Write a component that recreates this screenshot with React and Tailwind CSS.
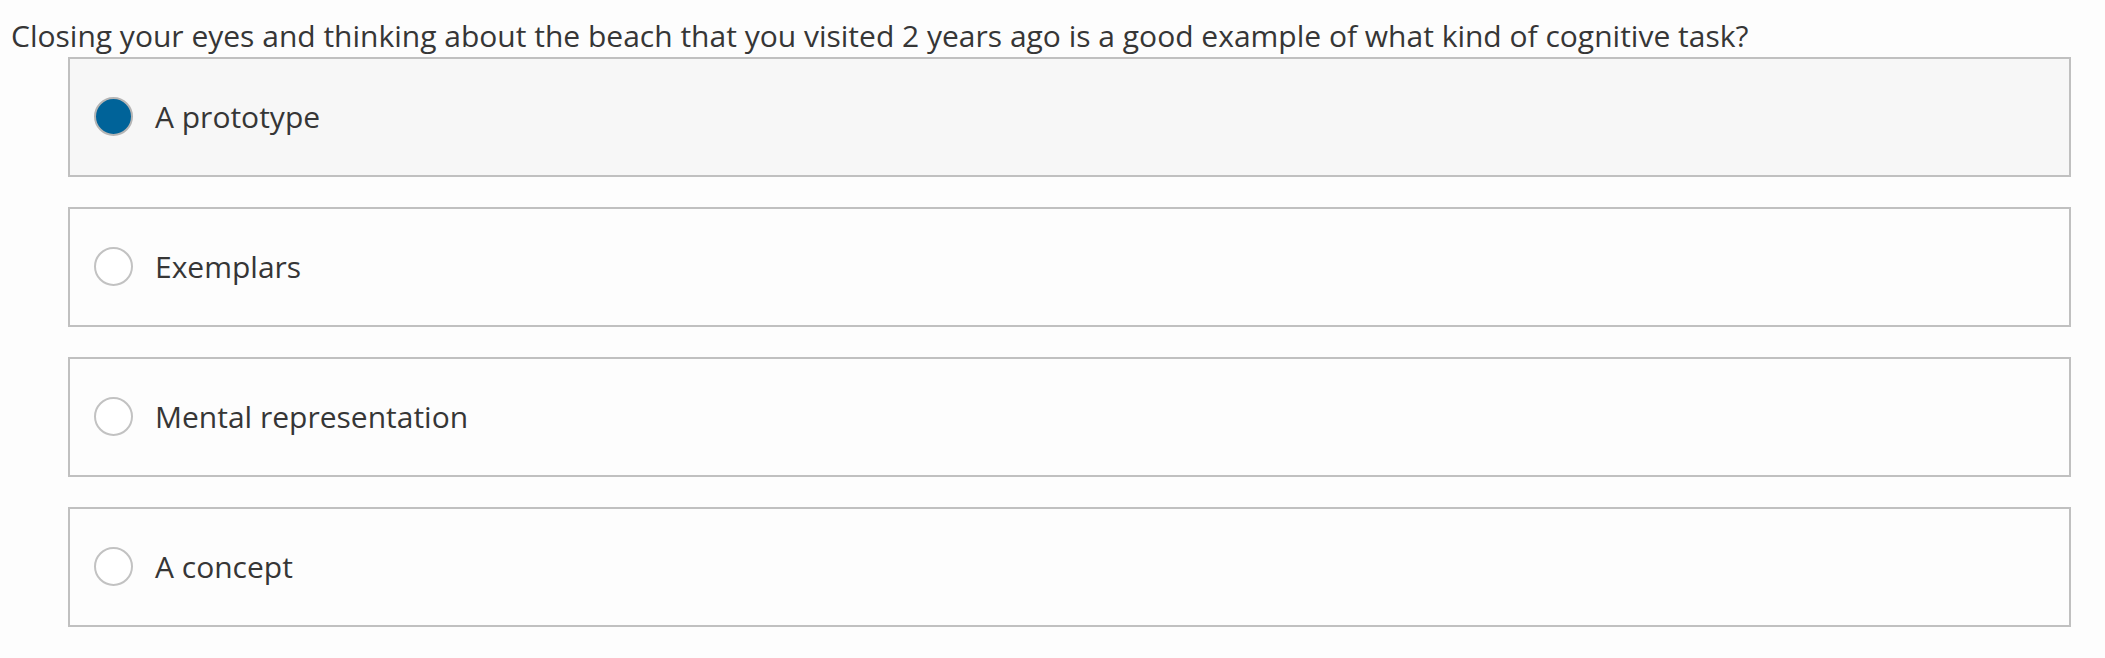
import React from "react";

const options = [
  { label: "A prototype", selected: true },
  { label: "Exemplars", selected: false },
  { label: "Mental representation", selected: false },
  { label: "A concept", selected: false },
];

const Radio = ({ selected }) => {
  if (selected) {
    return (
      <span className="block h-[39px] w-[39px] shrink-0 rounded-full border-2 border-[#b5b5b5] bg-[#006399]"></span>
    );
  }
  return (
    <span className="block h-[39px] w-[39px] shrink-0 rounded-full border-2 border-[#c2c2c2] bg-white"></span>
  );
};

const App = () => {
  return (
    <div
      className="h-[658px] w-full bg-[#fdfdfd] pt-[18px] text-[#363636]"
      style={{ fontFamily: '"Open Sans", sans-serif' }}
    >
      <p className="pl-[11px] text-[30px] leading-[36px]">
        Closing your eyes and thinking about the beach that you visited 2 years ago is a good example of what kind of cognitive task?
      </p>

      <div className="mt-[3px] ml-[68px] flex w-[2003px] flex-col gap-[30px]">
        {options.map((opt) => (
          <label
            key={opt.label}
            className={
              "flex h-[120px] cursor-pointer items-center gap-[22px] border-2 border-[#c0c0c0] pb-[1px] pl-[24px] " +
              (opt.selected ? "bg-[#f7f7f7]" : "bg-[#fdfdfd]")
            }
          >
            <Radio selected={opt.selected} />
            <span className="text-[30px] leading-[36px]">{opt.label}</span>
          </label>
        ))}
      </div>
    </div>
  );
};

export default App;
